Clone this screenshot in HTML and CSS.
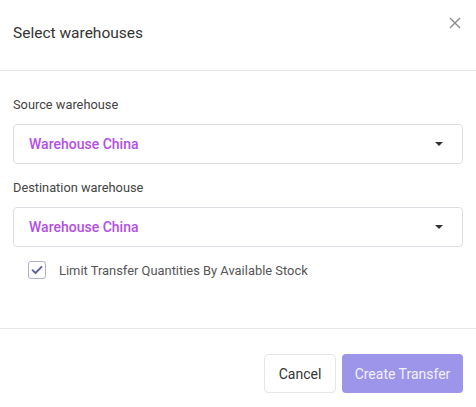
FILE: index.html
```html
<!DOCTYPE html>
<html>
<head>
<meta charset="utf-8">
<link rel="stylesheet" href="styles.css">
</head>
<body>
<div class="modal">
  <div class="header">
    <div class="title">Select warehouses</div>
    <button class="close" aria-label="Close">
      <svg width="12" height="12" viewBox="0 0 12 12"><path d="M1 1L11 11M11 1L1 11" stroke="#8a8a8a" stroke-width="1.4" fill="none"/></svg>
    </button>
  </div>
  <div class="content">
    <div class="label first">Source warehouse</div>
    <div class="select">
      <span class="value">Warehouse China</span>
      <span class="caret"></span>
    </div>
    <div class="label">Destination warehouse</div>
    <div class="select">
      <span class="value">Warehouse China</span>
      <span class="caret"></span>
    </div>
    <label class="check-row">
      <span class="checkbox">
        <svg width="12" height="10" viewBox="0 0 12 10"><path d="M1.5 5.2L4.5 8L10.5 1.8" stroke="#5b5f9c" stroke-width="1.8" fill="none" stroke-linecap="round" stroke-linejoin="round"/></svg>
      </span>
      <span class="check-label">Limit Transfer Quantities By Available Stock</span>
    </label>
  </div>
  <div class="footer">
    <button class="btn cancel">Cancel</button>
    <button class="btn primary">Create Transfer</button>
  </div>
</div>
</body>
</html>
```
FILE: styles.css
```css
* { box-sizing: border-box; }
html, body { margin: 0; padding: 0; background: #fff; }
body { font-family: Roboto, "Noto Sans", "Liberation Sans", sans-serif; color: #333; }
.modal { width: 476px; height: 407px; background: #fff; }
.header {
  height: 71px;
  border-bottom: 1px solid #e6e6e6;
  display: flex;
  justify-content: space-between;
  align-items: flex-start;
  padding: 23px 13px 0 13px;
}
.title { font-size: 15.5px; line-height: 20px; color: #333; }
.close {
  border: 0; background: none; padding: 0; margin: -6px 2px 0 0;
  width: 12px; height: 12px; display: flex; cursor: pointer;
}
.content { padding: 0 13px; }
.label { font-size: 12.8px; line-height: 20px; color: #444; margin-top: 14px; }
.label.first { margin-top: 24px; }
.select {
  margin-top: 9px;
  height: 40px;
  border: 1px solid #dedde3;
  border-radius: 4px;
  display: flex;
  align-items: center;
  justify-content: space-between;
  padding: 0 19px 0 15px;
}
.value { font-size: 14px; font-weight: 500; color: #b44ee6; }
.caret {
  width: 0; height: 0;
  border-left: 4px solid transparent;
  border-right: 4px solid transparent;
  border-top: 4px solid #333;
}
.check-row {
  display: flex; align-items: center;
  margin-top: 14px; padding-left: 15px; height: 18px;
}
.checkbox {
  width: 18px; height: 18px;
  border: 1px solid #b0b0cc;
  border-radius: 3px;
  display: flex; align-items: center; justify-content: center;
}
.check-label { margin-left: 13px; font-size: 12.9px; color: #555; }
.footer {
  margin-top: 49px;
  border-top: 1px solid #e6e6e6;
  display: flex; justify-content: flex-end; gap: 6px;
  padding: 25px 13px 0 13px;
}
.btn {
  height: 39px; border-radius: 4px; font-family: inherit; font-size: 14px;
  padding: 0; cursor: pointer;
}
.cancel { width: 72px; background: #fff; border: 1px solid #e6e6ea; color: #333; }
.primary { width: 121px; background: #9d95e9; border: 0; color: #f3f1fd; }
```
